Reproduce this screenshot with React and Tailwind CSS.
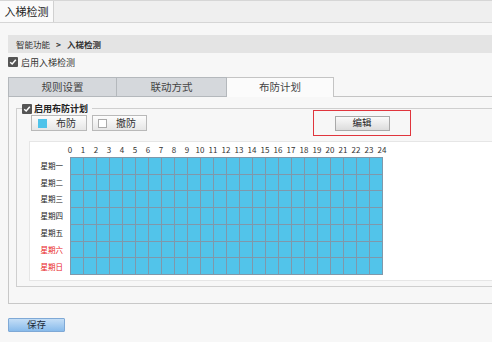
import React from 'react';

const days = [
  { name: '星期一', red: false },
  { name: '星期二', red: false },
  { name: '星期三', red: false },
  { name: '星期四', red: false },
  { name: '星期五', red: false },
  { name: '星期六', red: true },
  { name: '星期日', red: true },
];

const hours = Array.from({ length: 25 }, (_, i) => i);

function CheckBox() {
  return (
    <span className="flex h-[10px] w-[10px] shrink-0 items-center justify-center rounded-[1px] bg-[#555]">
      <svg width="8" height="8" viewBox="0 0 8 8">
        <path d="M1.2 4.2 L3.2 6 L6.8 1.8" stroke="#fff" strokeWidth="1.5" fill="none" />
      </svg>
    </span>
  );
}

export default function App() {
  return (
    <div
      className="h-[342px] w-[492px] overflow-hidden bg-[#f7f7f7] text-[#222]"
      style={{ fontFamily: '"Noto Sans CJK SC", "Noto Sans", sans-serif' }}
    >
      {/* top tab bar */}
      <div className="flex h-[23px] border-t border-b border-[#d6d6d6] bg-[#efefef]">
        <div className="flex w-[54px] items-center justify-center border-r border-[#d0d0d0] bg-[#fafafa] text-[11px] leading-none">
          入梯检测
        </div>
      </div>

      {/* breadcrumb */}
      <div className="ml-[8px] mt-[12px] flex h-[18px] items-center bg-[#e4e4e4] pl-[8px] text-[8.5px] leading-none text-[#333]">
        <span>智能功能</span>
        <span className="mx-[6px] font-bold">&gt;</span>
        <span className="font-bold">入梯检测</span>
      </div>

      {/* enable checkbox */}
      <div className="ml-[8px] mt-[4px] flex h-[10px] items-center gap-[3px] text-[9px] leading-none text-[#333]">
        <CheckBox />
        <span>启用入梯检测</span>
      </div>

      {/* tabs */}
      <div className="ml-[8px] mt-[10px] flex h-[20px]">
        <div className="flex w-[109px] items-center justify-center border border-[#b4b8bc] bg-[#d5d8dc] text-[10.5px] leading-none text-[#444]">
          规则设置
        </div>
        <div className="flex w-[110px] items-center justify-center border-y border-r border-[#b4b8bc] bg-[#d5d8dc] text-[10.5px] leading-none text-[#444]">
          联动方式
        </div>
        <div className="flex w-[107px] items-center justify-center border-t border-r border-[#c4c4c4] bg-[#fbfbfb] text-[10.5px] leading-none text-[#444]">
          布防计划
        </div>
        <div className="flex-1 border-b border-[#c4c4c4]" />
      </div>

      {/* panel */}
      <div className="ml-[8px] w-[500px] border-l border-b border-[#c8c8c8] pb-[16px] pl-[7px] pt-[11px]">
        <div className="border-y border-l border-[#cfcfcf] pb-[5px]">
          {/* legend */}
          <div className="-mt-[6px] ml-[5px] flex h-[11px] w-fit items-center gap-[2px] bg-[#f7f7f7] pr-[4px] text-[9px] font-bold leading-none text-[#222]">
            <CheckBox />
            <span>启用布防计划</span>
          </div>

          {/* buttons row */}
          <div className="-mt-[4px] ml-[14px] flex h-[26px] items-center">
            <button className="flex h-[16px] w-[56px] items-center border border-[#b9b9b9] bg-gradient-to-b from-[#fdfdfd] to-[#e6e6e6] pl-[6px] text-[10px] leading-none text-[#333]">
              <span className="h-[9px] w-[9px] bg-[#4fc3ea]" />
              <span className="ml-[9px]">布防</span>
            </button>
            <button className="ml-[5px] flex h-[16px] w-[55px] items-center border border-[#b9b9b9] bg-gradient-to-b from-[#fdfdfd] to-[#e6e6e6] pl-[5px] text-[10px] leading-none text-[#333]">
              <span className="h-[9px] w-[9px] border border-[#aaa] bg-white" />
              <span className="ml-[9px]">撤防</span>
            </button>
            <div className="ml-[166px] flex h-[26px] w-[98px] items-center justify-center border border-[#e0353d]">
              <button className="h-[15px] w-[55px] border border-[#a9a9a9] bg-gradient-to-b from-[#fafafa] to-[#dcdcdc] text-[9.5px] leading-none text-[#222]">
                编辑
              </button>
            </div>
          </div>

          {/* schedule grid */}
          <div className="ml-[12px] mt-[5px] border border-[#e6e6e6] bg-white pb-[5px]">
            <div className="grid h-[15px] grid-cols-[repeat(25,13px)] items-center pl-[33.5px] text-[8px] leading-none text-[#333]">
              {hours.map((h) => (
                <span key={h} className="text-center">{h}</span>
              ))}
            </div>
            <div className="flex">
              <div className="flex w-[40px] flex-col">
                {days.map((d) => (
                  <div
                    key={d.name}
                    className={`flex h-[16.86px] items-center justify-end pr-[7px] text-[7.5px] leading-none ${d.red ? 'text-[#e8221c]' : 'text-[#222]'}`}
                  >
                    {d.name}
                  </div>
                ))}
              </div>
              <div className="grid h-[118px] w-[313px] grid-cols-[repeat(24,13px)] grid-rows-[repeat(7,1fr)] border-l border-t border-[#7f98ab]">
                {Array.from({ length: 168 }, (_, i) => (
                  <div key={i} className="border-r border-b border-[#7f98ab] bg-[#52c4ea]" />
                ))}
              </div>
            </div>
          </div>
        </div>
      </div>

      {/* save */}
      <button className="ml-[8px] mt-[14px] h-[14px] w-[57px] rounded-[1px] border border-[#7fa9d6] bg-gradient-to-b from-[#c4def6] to-[#88bbeb] text-[9.5px] leading-none text-[#1d2b3a]">
        保存
      </button>
    </div>
  );
}
